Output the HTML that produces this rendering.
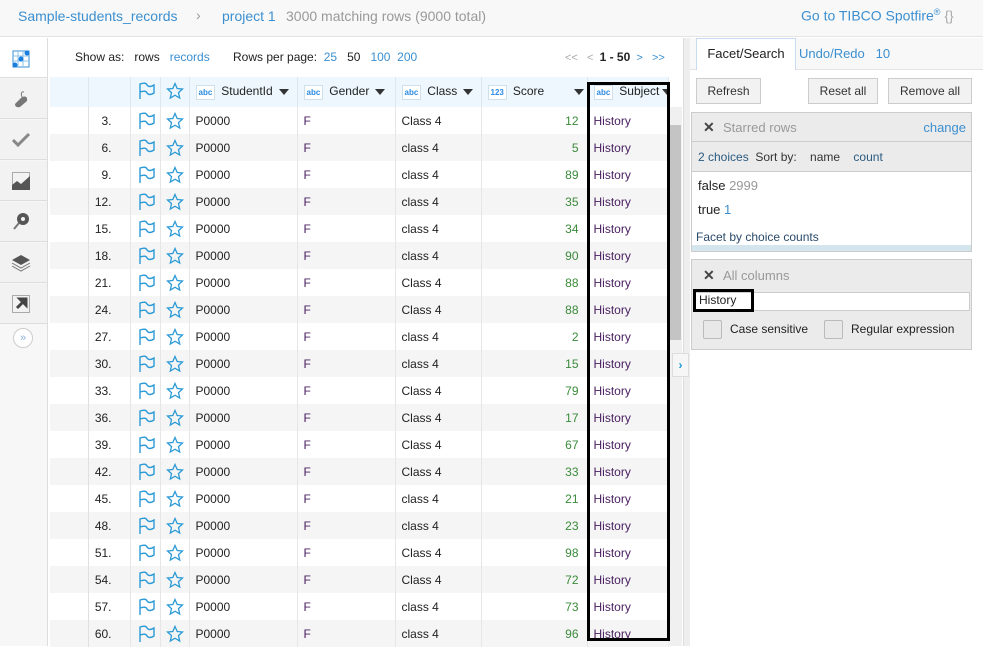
<!DOCTYPE html><html><head><meta charset="utf-8"><style>
*{box-sizing:border-box;margin:0;padding:0}
body{width:983px;height:646px;overflow:hidden;background:#fff;font-family:"Liberation Sans",Arial,sans-serif;font-size:12px;color:#222;position:relative}
.a{position:absolute}
.blue{color:#3b8fd0}
.top{left:0;top:0;width:983px;height:37px;background:#f8f8f8;border-bottom:1px solid #e4e4e4}
.side{left:0;top:38px;width:48px;height:608px;background:#f7f7f7;border-right:1px solid #ddd}
.si{left:0;width:47px;height:40px;border-bottom:1px solid #ddd;background:#f2f2f2}
table{border-collapse:collapse;position:absolute;left:50px;top:77px;width:618px;table-layout:fixed}
td{height:27px;border-right:1px solid #e6e6e6;font-size:12px;white-space:nowrap;overflow:hidden;padding-left:6px}
tr.h td{height:30px;background:#eef7fd;border-right:1px solid #dde8ee;color:#222}
.n{text-align:right;padding-right:18px}
.sc{text-align:right;padding-right:8px;color:#3a8a3a}
.f{color:#4a2060}
.tag{display:inline-block;font-size:8px;color:#2a8ae0;border:1px solid #cfe0ea;background:#fff;padding:2px 2px;margin-right:6px;vertical-align:middle;font-weight:bold}
.tri{display:inline-block;width:0;height:0;border-left:5px solid transparent;border-right:5px solid transparent;border-top:6px solid #333;vertical-align:middle;margin-left:6px}
.btn{height:26px;border:1px solid #ccc;background:#f2f2f2;color:#333;font-size:12px;text-align:center;line-height:24px}
.cb{width:19px;height:19px;border:1px solid #bbb;background:#e8e8e8;border-radius:2px}
</style></head><body>
<div class="a top">
<div class="a blue" style="left:18px;top:8px;font-size:14px">Sample-students_records</div>
<div class="a" style="left:196px;top:7px;font-size:14px;color:#999">›</div>
<div class="a blue" style="left:222px;top:8px;font-size:14px">project 1</div>
<div class="a" style="left:286px;top:8px;font-size:14px;color:#999">3000 matching rows (9000 total)</div>
<div class="a blue" style="left:801px;top:7px;font-size:14px">Go to TIBCO Spotfire<sup style="font-size:9px">®</sup> <span style="color:#aaa">{}</span></div>
</div>
<div class="a side">
<div class="a si" style="top:0;background:#fff"><svg class="a" style="left:12px;top:12px" width="18" height="18"><rect x="1" y="1" width="16" height="16" fill="none" stroke="#3b8fd0"/><path d="M1 6H17M1 11H17M6 1V17M11 1V17" stroke="#8cc0ea"/><circle cx="3" cy="15" r="2.5" fill="#1a7ee0"/><circle cx="9" cy="9" r="2.5" fill="#1a7ee0"/><circle cx="15" cy="3" r="2.5" fill="#1a7ee0"/></svg></div>
<div class="a si" style="top:41px"><svg class="a" style="left:12px;top:10px" width="20" height="20"><path d="M3 15 L10 8 Q16 6 15 12 L8 18 Q3 19 3 15Z" fill="#777"/><path d="M10 8 Q8 2 12 3" stroke="#777" fill="none"/></svg></div>
<div class="a si" style="top:82px"><svg class="a" style="left:11px;top:11px" width="20" height="18"><path d="M2 9 L7 14 L18 3" stroke="#888" stroke-width="3" fill="none"/></svg></div>
<div class="a si" style="top:123px"><svg class="a" style="left:12px;top:11px" width="18" height="18"><rect x="0.5" y="0.5" width="17" height="17" fill="none" stroke="#aaa"/><path d="M0 18 L0 13 L5 9 L9 12 L18 4 L18 18Z" fill="#555"/></svg></div>
<div class="a si" style="top:164px"><svg class="a" style="left:12px;top:10px" width="18" height="20"><circle cx="11" cy="7" r="6" fill="#555"/><circle cx="11" cy="7" r="2" fill="#f2f2f2"/><path d="M7 11 L2 17" stroke="#777" stroke-width="2"/></svg></div>
<div class="a si" style="top:205px"><svg class="a" style="left:11px;top:11px" width="20" height="18"><path d="M10 1 L19 6 L10 11 L1 6Z" fill="#555"/><path d="M1 9 L10 14 L19 9 M1 12 L10 17 L19 12" stroke="#777" fill="none"/></svg></div>
<div class="a si" style="top:246px"><svg class="a" style="left:12px;top:11px" width="18" height="18"><rect x="0.5" y="0.5" width="17" height="17" fill="none" stroke="#aaa"/><path d="M5 13 L13 5 M8 4 L14 4 L14 10Z" stroke="#444" stroke-width="3" fill="#444"/></svg></div>
<div class="a" style="left:13px;top:290px;width:20px;height:20px;border-radius:50%;border:1px solid #ccc;background:#fff;color:#8ab0d8;font-size:11px;text-align:center;line-height:18px">»</div>
</div>
<div class="a" style="left:75px;top:50px">Show as:&nbsp;&nbsp; rows&nbsp;&nbsp; <span class="blue">records</span></div>
<div class="a" style="left:233px;top:50px">Rows per page:&nbsp; <span class="blue">25</span>&nbsp;&nbsp; 50&nbsp;&nbsp; <span class="blue">100</span>&nbsp; <span class="blue">200</span></div>
<div class="a" style="left:565px;top:50px;color:#aaa;font-size:11px">&lt;&lt;&nbsp;&nbsp; &lt;&nbsp; <b style="color:#222;font-size:12px">1 - 50</b>&nbsp; <span class="blue">&gt;</span>&nbsp;&nbsp; <span class="blue">&gt;&gt;</span></div>
<table>
<colgroup><col style="width:38px"><col style="width:42px"><col style="width:30px"><col style="width:29px"><col style="width:108px"><col style="width:98px"><col style="width:86px"><col style="width:106px"><col style="width:81px"></colgroup>
<tr class="h"><td></td><td></td><td><svg width="18" height="18"><path d="M3 17V2 Q9 0 10 3 Q12 6 17 3 V11 Q12 14 10 11 Q9 8 3 10" stroke="#2b9ad6" stroke-width="1.4" fill="none"/></svg></td><td style="padding-left:5px"><svg width="18" height="18"><path d="M9 1.5 L11.2 6.5 L16.5 7 L12.5 10.6 L13.7 16 L9 13.2 L4.3 16 L5.5 10.6 L1.5 7 L6.8 6.5Z" stroke="#2b9ad6" stroke-width="1.3" fill="none"/></svg></td><td><span class="tag">abc</span>StudentId<span class="tri"></span></td><td><span class="tag">abc</span>Gender<span class="tri"></span></td><td><span class="tag">abc</span>Class<span class="tri"></span></td><td><span class="tag">123</span>Score<span class="tri" style="margin-left:30px"></span></td><td><span class="tag">abc</span>Subject<span class="tri" style="margin-left:3px"></span></td></tr>
</table>
<table style="top:107px" id="t">
<colgroup><col style="width:38px"><col style="width:42px"><col style="width:30px"><col style="width:29px"><col style="width:108px"><col style="width:98px"><col style="width:86px"><col style="width:106px"><col style="width:81px"></colgroup>
</table>
<svg width="0" height="0" style="position:absolute"><defs>
<symbol id="fl" viewBox="0 0 18 18"><path d="M3 17V2 Q9 0 10 3 Q12 6 17 3 V11 Q12 14 10 11 Q9 8 3 10" stroke="#2b9ad6" stroke-width="1.4" fill="none"/></symbol>
<symbol id="st" viewBox="0 0 18 18"><path d="M9 1.5 L11.2 6.5 L16.5 7 L12.5 10.6 L13.7 16 L9 13.2 L4.3 16 L5.5 10.6 L1.5 7 L6.8 6.5Z" stroke="#2b9ad6" stroke-width="1.3" fill="none"/></symbol></defs></svg>
<script>
var d=[[3,12,'Class 4'],[6,5,'class 4'],[9,89,'class 4'],[12,35,'class 4'],[15,34,'class 4'],[18,90,'class 4'],[21,88,'Class 4'],[24,88,'Class 4'],[27,2,'class 4'],[30,15,'class 4'],[33,79,'Class 4'],[36,17,'Class 4'],[39,67,'Class 4'],[42,33,'Class 4'],[45,21,'class 4'],[48,23,'class 4'],[51,98,'Class 4'],[54,72,'Class 4'],[57,73,'class 4'],[60,96,'class 4']];
var h='';d.forEach(function(r,i){h+='<tr style="background:'+(i%2?'#f5f5f5':'#fff')+'"><td style="background:inherit"></td><td class="n" style="background:inherit">'+r[0]+'.</td><td style="background:inherit"><svg width="18" height="18" style="vertical-align:middle"><use href="#fl"/></svg></td><td style="background:inherit;padding-left:5px"><svg width="18" height="18" style="vertical-align:middle"><use href="#st"/></svg></td><td style="background:inherit">P0000</td><td class="f" style="background:inherit">F</td><td style="background:inherit">'+r[2]+'</td><td class="sc" style="background:inherit">'+r[1]+'</td><td class="f" style="background:inherit">History</td></tr>';});
document.getElementById('t').insertAdjacentHTML('beforeend',h);
</script>
<div class="a" style="left:88px;top:107px;width:1px;height:540px;background:#e0e0e0"></div>
<div class="a" style="left:668px;top:107px;width:14px;height:539px;background:#f0f0f0"></div>
<div class="a" style="left:669px;top:125px;width:12px;height:215px;background:#c4c4c4"></div>
<div class="a" style="left:587px;top:82px;width:83px;height:559px;border:3px solid #000"></div>
<div class="a" style="left:683px;top:38px;width:7px;height:608px;background:#eee;border-left:1px solid #ddd"></div>
<div class="a" style="left:672px;top:353px;width:17px;height:24px;background:#f6f6f6;border:1px solid #ddd;color:#1a9ad6;font-weight:bold;text-align:center;line-height:22px">›</div>
<div class="a" style="left:690px;top:38px;width:293px;height:32px;background:#f8f8f8;border-bottom:1px solid #e4e4e4"></div>
<div class="a" style="left:696px;top:38px;width:100px;height:32px;background:#fff;border:1px solid #c8daf0;border-bottom:none;text-align:center;line-height:30px;font-size:13px">Facet/Search</div>
<div class="a blue" style="left:799px;top:46px;font-size:13px">Undo/Redo&nbsp;&nbsp; 10</div>
<div class="a btn" style="left:696px;top:78px;width:65px">Refresh</div>
<div class="a btn" style="left:808px;top:78px;width:70px">Reset all</div>
<div class="a btn" style="left:888px;top:78px;width:84px">Remove all</div>
<div class="a" style="left:691px;top:112px;width:281px;height:140px;border:1px solid #ccc;background:#fff">
<div class="a" style="left:0;top:0;width:279px;height:29px;background:#ebebeb;border-bottom:1px solid #ccc"><span class="a" style="left:11px;top:6px;font-size:14px;font-weight:bold;color:#444">✕</span><span class="a" style="left:31px;top:7px;color:#999;font-size:13px">Starred rows</span><span class="a blue" style="right:5px;top:7px;font-size:13px">change</span></div>
<div class="a" style="left:0;top:29px;width:279px;height:30px;background:#ebebeb;border-bottom:1px solid #ccc"><span class="a" style="left:6px;top:8px;color:#333"><span style="color:#2a5a80">2 choices</span>&nbsp; Sort by:&nbsp;&nbsp;&nbsp; name&nbsp;&nbsp;&nbsp; <span style="color:#2a5a80">count</span></span></div>
<div class="a" style="left:6px;top:65px;font-size:13px">false <span style="color:#999">2999</span></div>
<div class="a" style="left:6px;top:89px;font-size:13px">true <span class="blue">1</span></div>
<div class="a" style="left:4px;top:117px;color:#2a4a6a">Facet by choice counts</div>
<div class="a" style="left:0;top:132px;width:279px;height:6px;background:#d5e5ee"></div>
</div>
<div class="a" style="left:691px;top:259px;width:281px;height:91px;border:1px solid #ccc;background:#ebebeb">
<span class="a" style="left:11px;top:7px;font-size:14px;font-weight:bold;color:#444">✕</span><span class="a" style="left:31px;top:8px;color:#999;font-size:13px">All columns</span>
<div class="a" style="left:3px;top:32px;width:275px;height:19px;background:#fff;border:1px solid #ccc"></div>
<div class="a" style="left:1px;top:29px;width:61px;height:23px;border:3px solid #000;font-size:12px;padding-left:3px;line-height:17px">History</div>
<div class="a cb" style="left:11px;top:60px"></div><span class="a" style="left:38px;top:62px">Case sensitive</span>
<div class="a cb" style="left:132px;top:60px"></div><span class="a" style="left:159px;top:62px">Regular expression</span>
</div>
</body></html>
